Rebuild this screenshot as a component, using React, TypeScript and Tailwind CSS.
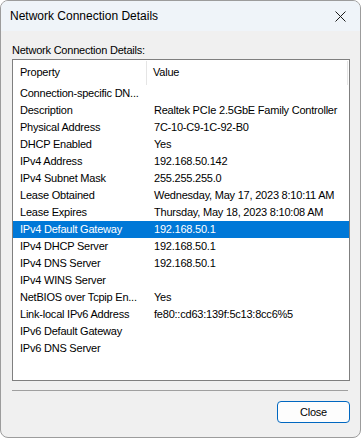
const rows: [string, string][] = [
  ['Connection-specific DN...', ''],
  ['Description', 'Realtek PCIe 2.5GbE Family Controller'],
  ['Physical Address', '7C-10-C9-1C-92-B0'],
  ['DHCP Enabled', 'Yes'],
  ['IPv4 Address', '192.168.50.142'],
  ['IPv4 Subnet Mask', '255.255.255.0'],
  ['Lease Obtained', 'Wednesday, May 17, 2023 8:10:11 AM'],
  ['Lease Expires', 'Thursday, May 18, 2023 8:10:08 AM'],
  ['IPv4 Default Gateway', '192.168.50.1'],
  ['IPv4 DHCP Server', '192.168.50.1'],
  ['IPv4 DNS Server', '192.168.50.1'],
  ['IPv4 WINS Server', ''],
  ['NetBIOS over Tcpip En...', 'Yes'],
  ['Link-local IPv6 Address', 'fe80::cd63:139f:5c13:8cc6%5'],
  ['IPv6 Default Gateway', ''],
  ['IPv6 DNS Server', ''],
];

const SELECTED = 8;

export default function App() {
  return (
    <div className="w-[362px] h-[438px] bg-white font-['Liberation_Sans',Arial,sans-serif] text-black">
      <div className="w-[361px] h-[438px] flex flex-col border border-[#9c9c9c] rounded-[8px] overflow-hidden bg-[#f0f0f0]">
        {/* title bar */}
        <div className="h-[30px] shrink-0 flex items-center justify-between bg-[#eff4f9] pl-[9px] pr-[10px]">
          <span className="text-[12px] leading-none">Network Connection Details</span>
          <svg width="11" height="11" viewBox="0 0 11 11" className="mr-[4px]">
            <path d="M0.5 0.5 L10.5 10.5 M10.5 0.5 L0.5 10.5" stroke="#1a1a1a" strokeWidth="1" />
          </svg>
        </div>

        {/* body */}
        <div className="flex flex-col pl-[11px] pr-[10px] pt-[12px] tracking-[-0.22px] text-[11px]">
          <div className="h-[14px] leading-[14px]">Network Connection Details:</div>

          <div className="mt-[2px] h-[322px] border border-[#7f7f7f] bg-white flex flex-col">
            <div className="h-[25px] shrink-0 flex items-center">
              <div className="w-[134px] h-[24px] flex items-center pl-[7px] border-r border-[#e5e5e5]">Property</div>
              <div className="flex-1 h-[24px] flex items-center pl-[6px] border-r border-[#e5e5e5] mr-[1px]">Value</div>
            </div>
            {rows.map(([name, value], i) => (
              <div
                key={name}
                className={`h-[17px] shrink-0 flex items-center leading-none ${
                  i === SELECTED ? 'bg-[#0078d7] text-white' : ''
                }`}
              >
                <div className="w-[135px] pl-[7px] whitespace-nowrap overflow-hidden">{name}</div>
                <div className="flex-1 pl-[6px] whitespace-nowrap overflow-hidden">{value}</div>
              </div>
            ))}
          </div>

          <div className="mt-[9px] h-[1px] bg-[#a0a0a0] mr-[2px]" />

          <div className="mt-[10px] flex justify-end">
            <button className="w-[73px] h-[22px] rounded-[4px] border border-[#0067c0] bg-[#fdfdfd] text-[11px] leading-none flex items-center justify-center">
              Close
            </button>
          </div>
        </div>
      </div>
    </div>
  );
}
